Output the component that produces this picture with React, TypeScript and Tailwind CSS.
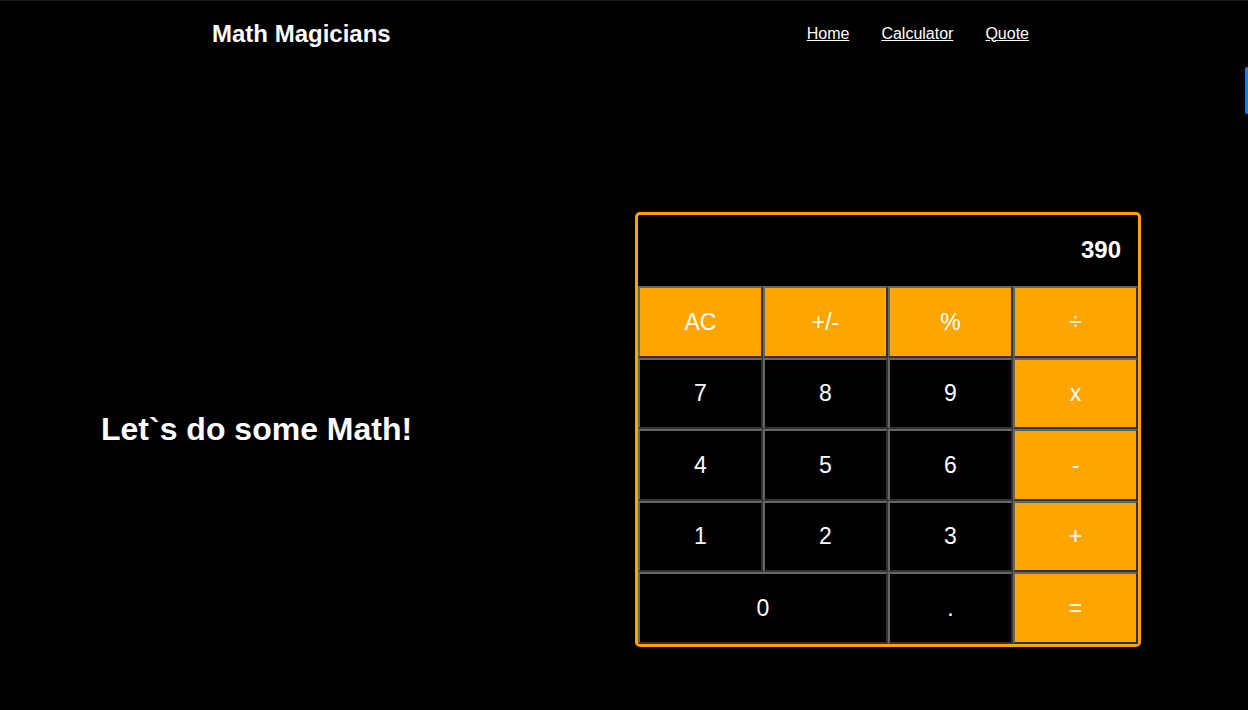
import React from "react";

const btnBase =
  "flex items-center justify-center text-[23px] text-white border-2 border-t-[#666666] border-l-[#666666] border-b-[#323232] border-r-[#323232]";
const orange = "bg-[#ffa500]";
const dark = "bg-black";

type B = { label: string; kind: "o" | "d"; span?: boolean };

const buttons: B[] = [
  { label: "AC", kind: "o" },
  { label: "+/-", kind: "o" },
  { label: "%", kind: "o" },
  { label: "÷", kind: "o" },
  { label: "7", kind: "d" },
  { label: "8", kind: "d" },
  { label: "9", kind: "d" },
  { label: "x", kind: "o" },
  { label: "4", kind: "d" },
  { label: "5", kind: "d" },
  { label: "6", kind: "d" },
  { label: "-", kind: "o" },
  { label: "1", kind: "d" },
  { label: "2", kind: "d" },
  { label: "3", kind: "d" },
  { label: "+", kind: "o" },
  { label: "0", kind: "d", span: true },
  { label: ".", kind: "d" },
  { label: "=", kind: "o" },
];

export default function App() {
  return (
    <div
      className="relative w-[1248px] h-[710px] bg-black text-white overflow-hidden border-t border-[#1c1c1c]"
      style={{ fontFamily: '"Liberation Sans", Arial, sans-serif' }}
    >
      <header className="h-[65px] flex items-center justify-between pl-[212px] pr-[219px]">
        <h1 className="text-[24px] font-bold leading-none">Math Magicians</h1>
        <nav className="flex gap-8 text-[16px]">
          <a className="underline" href="#">Home</a>
          <a className="underline" href="#">Calculator</a>
          <a className="underline" href="#">Quote</a>
        </nav>
      </header>

      <div className="absolute right-0 top-[66px] w-[3px] h-[47px] bg-[#1a7fe0] rounded-l-[2px]" />

      <main className="mt-[83px] h-[560px] flex items-center">
        <h2 className="ml-[101px] text-[32px] font-bold leading-none">Let`s do some Math!</h2>
        <div className="ml-auto mr-[107px] w-[506px] h-[435px] border-[3px] border-[#ffa500] rounded-[5px] grid grid-cols-4 grid-rows-6">
          <div className="col-span-4 flex items-center justify-end pr-[17px] text-[24px] font-bold">390</div>
          {buttons.map((b) => (
            <div
              key={b.label}
              className={`${btnBase} ${b.kind === "o" ? orange : dark} ${b.span ? "col-span-2" : ""}`}
            >
              {b.label}
            </div>
          ))}
        </div>
      </main>
    </div>
  );
}
